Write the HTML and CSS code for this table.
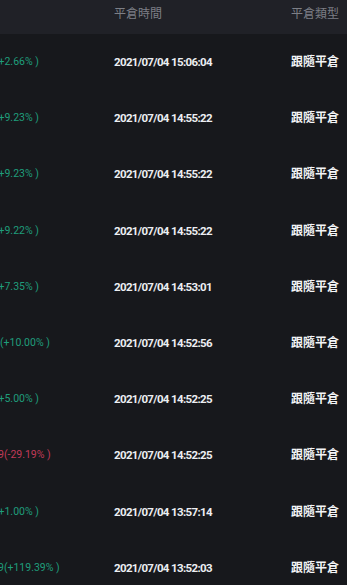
FILE: index.html
```html
<!DOCTYPE html>
<html lang="zh-Hant">
<head>
<meta charset="utf-8">
<link rel="stylesheet" href="styles.css">
</head>
<body>
<div class="table">
  <div class="head">
    <div class="hcell"></div>
    <div class="hcell">平倉時間</div>
    <div class="hcell right">平倉類型</div>
  </div>
  <div class="row"><div class="pct up cut">+2.66% )</div><div class="time">2021/07/04 15:06:04</div><div class="type">跟隨平倉</div></div>
  <div class="row"><div class="pct up cut">+9.23% )</div><div class="time">2021/07/04 14:55:22</div><div class="type">跟隨平倉</div></div>
  <div class="row"><div class="pct up cut">+9.23% )</div><div class="time">2021/07/04 14:55:22</div><div class="type">跟隨平倉</div></div>
  <div class="row"><div class="pct up cut">+9.22% )</div><div class="time">2021/07/04 14:55:22</div><div class="type">跟隨平倉</div></div>
  <div class="row"><div class="pct up cut">+7.35% )</div><div class="time">2021/07/04 14:53:01</div><div class="type">跟隨平倉</div></div>
  <div class="row"><div class="pct up">(+10.00% )</div><div class="time">2021/07/04 14:52:56</div><div class="type">跟隨平倉</div></div>
  <div class="row"><div class="pct up cut">+5.00% )</div><div class="time">2021/07/04 14:52:25</div><div class="type">跟隨平倉</div></div>
  <div class="row"><div class="pct down cut2">9(-29.19% )</div><div class="time">2021/07/04 14:52:25</div><div class="type">跟隨平倉</div></div>
  <div class="row"><div class="pct up cut">+1.00% )</div><div class="time">2021/07/04 13:57:14</div><div class="type">跟隨平倉</div></div>
  <div class="row"><div class="pct up cut2">9(+119.39% )</div><div class="time">2021/07/04 13:52:03</div><div class="type">跟隨平倉</div></div>
</div>
</body>
</html>
```

FILE: styles.css
```css
html, body {
  margin: 0;
  padding: 0;
  background: #17181c;
}
body {
  width: 347px;
  height: 585px;
  overflow: hidden;
  font-family: Roboto, "Noto Sans CJK TC", sans-serif;
}
.table {
  display: flex;
  flex-direction: column;
}
.head, .row {
  display: grid;
  grid-template-columns: 114px 1fr auto;
  padding-right: 8px;
}
.head {
  height: 34px;
  background: #202127;
  align-items: start;
  padding-top: 7px;
  box-sizing: border-box;
}
.hcell {
  font-size: 12px;
  line-height: 14px;
  color: #7d7f86;
}
.right { text-align: right; }
.row {
  height: 56.2px;
  align-items: center;
}
.pct {
  font-size: 10.5px;
  line-height: 14px;
  white-space: nowrap;
  overflow: hidden;
}
.up { color: #1f9d7b; }
.down { color: #c13a58; }
.cut { text-indent: -1.5px; }
.cut2 { text-indent: -2px; }
.time {
  font-size: 11.5px;
  font-weight: 700;
  color: #eceef2;
  letter-spacing: -0.65px;
  line-height: 14px;
  white-space: nowrap;
}
.type {
  font-size: 12px;
  font-weight: 700;
  color: #f4f5f7;
  line-height: 14px;
  text-align: right;
}
```
